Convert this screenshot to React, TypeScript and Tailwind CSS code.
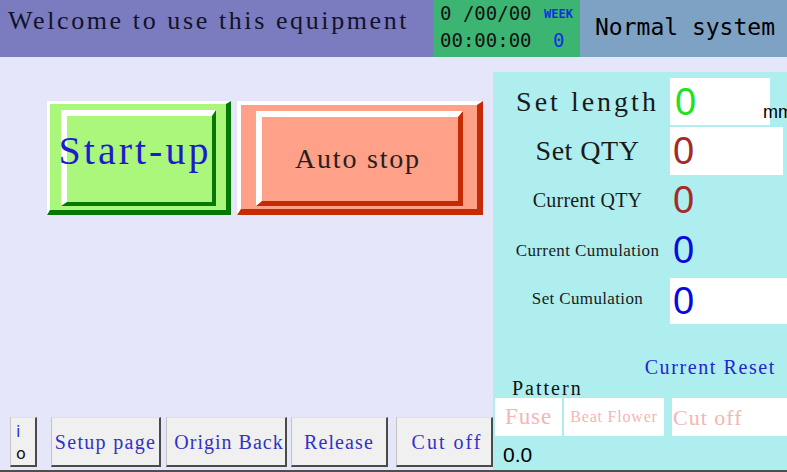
import React from 'react';

function KeyButton({ label, className }: { label: string; className: string }) {
  return (
    <div
      className={`h-[50px] shrink-0 flex items-center justify-center bg-[#f0f0f0] border-l border-t border-l-[#c4c4c4] border-t-[#dedede] border-r-2 border-b-2 border-r-[#4a4a4a] border-b-[#4a4a4a] text-[20px] text-[#3232c6] whitespace-nowrap ${className}`}
    >
      {label}
    </div>
  );
}

function ValueRow({
  label,
  labelClass,
  value,
  valueColor,
  boxed,
  boxWidth,
  rowClass,
}: {
  label: string;
  labelClass: string;
  value: string;
  valueColor: string;
  boxed: boolean;
  boxWidth: string;
  rowClass: string;
}) {
  return (
    <div className={`flex items-center shrink-0 ${rowClass}`}>
      <div className={`w-[165px] ml-[12px] shrink-0 text-center leading-none whitespace-nowrap text-[#1a1a1a] ${labelClass}`}>{label}</div>
      <div className={`h-full shrink-0 flex items-center pl-[3px] ${boxed ? 'bg-white' : ''} ${boxWidth}`}>
        <span className={`font-['Liberation_Sans',sans-serif] text-[38px] leading-none ${valueColor}`}>{value}</span>
      </div>
    </div>
  );
}

export default function App() {
  return (
    <div className="w-[787px] h-[472px] flex flex-col bg-[#e6e6fa] overflow-hidden font-['Liberation_Serif',serif]">
      {/* top status bar */}
      <header className="h-[57px] flex shrink-0">
        <div className="w-[434px] shrink-0 bg-[#7b7bc0] pl-[8px] pt-[6px] text-[26px] leading-[30px] tracking-[2.6px] text-[#12122a] whitespace-nowrap">
          Welcome to use this equipment
        </div>
        <div className="w-[146px] shrink-0 bg-[#3cb572] pl-[6px] font-['DejaVu_Sans_Mono',monospace] text-[#111]">
          <div className="flex items-center h-[27px]">
            <span className="w-[104px] text-[19px] whitespace-pre">0 /00/00</span>
            <span className="text-[12px] font-bold text-[#1030e0]">WEEK</span>
          </div>
          <div className="flex items-center h-[27px]">
            <span className="w-[113px] text-[19px]">00:00:00</span>
            <span className="text-[19px] text-[#1030e0]">0</span>
          </div>
        </div>
        <div className="flex-1 bg-[#7ea2c4] pl-[15px] pb-[3px] flex items-center font-['DejaVu_Sans_Mono',monospace] text-[23px] text-black whitespace-nowrap">
          Normal system
        </div>
      </header>

      <div className="flex flex-1 min-h-0">
        {/* left work area */}
        <div className="w-[493px] shrink-0 flex flex-col">
          <div className="flex mt-[44px] ml-[47px] gap-[6px]">
            <div className="w-[184px] h-[114px] bg-[#abf77c] border-t-[3px] border-l-[3px] border-r-[5px] border-b-[5px] border-t-white border-l-white border-r-[#067806] border-b-[#067806] pt-[6px] pl-[11px] pr-[10px] pb-[4px]">
              <div className="h-full border-t-[6px] border-l-[6px] border-r-[4px] border-b-[4px] border-t-white border-l-white border-r-[#067806] border-b-[#067806] flex items-center justify-center">
                <span className="text-[40px] leading-none tracking-[3px] text-[#1c1ccf] whitespace-nowrap -ml-[9px] -mt-[17px]">Start-up</span>
              </div>
            </div>
            <div className="w-[246px] h-[114px] bg-[#ffa088] border-t-[4px] border-l-[4px] border-r-[6px] border-b-[6px] border-t-white border-l-white border-r-[#c42c06] border-b-[#c42c06] pt-[6px] pl-[15px] pr-[14px] pb-[3px]">
              <div className="h-full border-t-[6px] border-l-[6px] border-r-[5px] border-b-[5px] border-t-white border-l-white border-r-[#c42c06] border-b-[#c42c06] flex items-center justify-center">
                <span className="text-[28px] leading-none tracking-[1.8px] text-[#222] whitespace-nowrap -ml-[4px]">Auto stop</span>
              </div>
            </div>
          </div>

          <div className="mt-auto mb-[3px] flex items-end">
            <div className="ml-[10px] w-[27px] h-[50px] shrink-0 flex flex-col justify-between pl-[5px] pt-[4px] pb-[1px] bg-[#f0f0f0] border-l border-t border-l-[#c4c4c4] border-t-[#dedede] border-r-2 border-b-2 border-r-[#4a4a4a] border-b-[#4a4a4a] font-['DejaVu_Sans',sans-serif] text-[16px] leading-[20px]">
              <span className="text-[#2a2ad0]">i</span>
              <span className="text-[#111]">o</span>
            </div>
            <KeyButton label="Setup page" className="ml-[14px] w-[110px] tracking-[1.3px]" />
            <KeyButton label="Origin Back" className="ml-[5px] w-[121px] pl-[6px] tracking-[1px]" />
            <KeyButton label="Release" className="ml-[4px] w-[97px] tracking-[1.1px]" />
            <KeyButton label="Cut off" className="ml-[8px] w-[97px] pl-[6px] tracking-[2px]" />
          </div>
        </div>

        {/* right parameter panel */}
        <div className="flex-1 mt-[15px] bg-[#afeeee] flex flex-col pt-[6px] overflow-hidden">
          <div className="flex items-center h-[47px] shrink-0">
            <div className="w-[165px] ml-[12px] shrink-0 text-center text-[28px] leading-none tracking-[3px] text-[#1a1a1a] whitespace-nowrap">Set length</div>
            <div className="w-[100px] h-full shrink-0 bg-white flex items-center pl-[5px]">
              <span className="font-['Liberation_Sans',sans-serif] text-[38px] leading-none text-[#22e022]">0</span>
            </div>
            <span className="self-end mb-[4px] -ml-[7px] shrink-0 font-['Liberation_Sans',sans-serif] text-[18px] leading-[18px] text-black">mm</span>
          </div>
          <ValueRow label="Set QTY" labelClass="text-[28px] tracking-[0.5px]" value="0" valueColor="text-[#a52a2a]" boxed boxWidth="w-[113px]" rowClass="h-[48px] mt-[2px]" />
          <ValueRow label="Current QTY" labelClass="text-[20px] tracking-[0.2px]" value="0" valueColor="text-[#a52a2a]" boxed={false} boxWidth="w-[113px]" rowClass="h-[50px]" />
          <ValueRow label="Current Cumulation" labelClass="text-[17px] tracking-[0.4px]" value="0" valueColor="text-[#0808e0]" boxed={false} boxWidth="w-[113px]" rowClass="h-[50px]" />
          <ValueRow label="Set Cumulation" labelClass="text-[17px] tracking-[0.36px] mb-[5px]" value="0" valueColor="text-[#0808e0]" boxed boxWidth="w-[117px]" rowClass="h-[46px] mt-[3px]" />

          <div className="mt-[33px] pr-[11px] text-right text-[20px] leading-[20px] tracking-[1.6px] text-[#2424d0]">Current Reset</div>
          <div className="mt-[1px] pl-[19px] text-[20px] leading-[20px] tracking-[2px] text-[#111]">Pattern</div>
          <div className="flex h-[38px] shrink-0">
            <div className="ml-[2px] w-[67px] shrink-0 bg-white flex items-center justify-center text-[23px] tracking-[0.9px] text-[#f2b6b6]">Fuse</div>
            <div className="ml-[2px] w-[100px] shrink-0 bg-white flex items-center justify-center text-[16px] tracking-[0.8px] text-[#f2b6b6] whitespace-nowrap">Beat Flower</div>
            <div className="ml-[8px] flex-1 bg-white flex items-center pl-[1px] text-[22px] tracking-[1px] text-[#f2b6b6] whitespace-nowrap">Cut off</div>
          </div>
          <div className="pl-[10px] pt-[7px] font-['Liberation_Sans',sans-serif] text-[21px] leading-[24px] text-black">0.0</div>
        </div>
      </div>

      <div className="h-[2px] shrink-0 bg-[#4e4e4e]" />
    </div>
  );
}
